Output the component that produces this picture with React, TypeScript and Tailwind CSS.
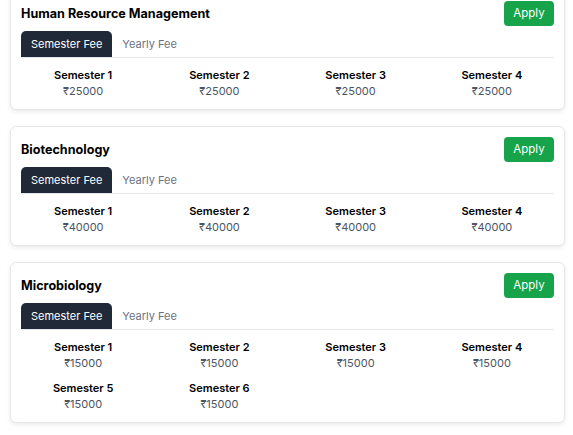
import React from "react";

type Course = { name: string; fees: number[] };

const courses: Course[] = [
  { name: "Human Resource Management", fees: [25000, 25000, 25000, 25000] },
  { name: "Biotechnology", fees: [40000, 40000, 40000, 40000] },
  { name: "Microbiology", fees: [15000, 15000, 15000, 15000, 15000, 15000] },
];

function Card({ course }: { course: Course }) {
  return (
    <div className="rounded-md border border-[#e5e7eb] bg-white px-[10px] pt-[10px] pb-[10px] shadow-[0_2px_4px_rgba(0,0,0,0.08)]">
      <div className="flex items-center justify-between">
        <h2 className="text-[12.6px] font-bold text-black leading-[25px]">{course.name}</h2>
        <button className="h-[25px] w-[50px] rounded-[4px] bg-[#16a34a] text-[11.5px] text-white">
          Apply
        </button>
      </div>
      <div className="mt-[5px] flex border-b border-[#e5e7eb]">
        <div className="h-[26px] rounded-t-[5px] bg-[#1f2937] px-[10px] text-[11px] leading-[26px] text-white">
          Semester Fee
        </div>
        <div className="h-[26px] px-[10px] text-[11px] leading-[26px] text-[#6b7280]">
          Yearly Fee
        </div>
      </div>
      <div className="mt-[9px] grid grid-cols-4 gap-x-3 gap-y-[9px]">
        {course.fees.map((fee, i) => (
          <div key={i} className="flex flex-col items-center">
            <div className="text-[11px] font-semibold leading-[16px] text-black">Semester {i + 1}</div>
            <div className="text-[11px] leading-[16px] text-[#4b5563]">₹{fee}</div>
          </div>
        ))}
      </div>
    </div>
  );
}

export default function App() {
  return (
    <div
      className="ml-[10px] mr-[8px] -mt-[10px] flex flex-col gap-[16px] pb-4"
      style={{ fontFamily: "Inter, 'Noto Sans', sans-serif" }}
    >
      {courses.map((c) => (
        <Card key={c.name} course={c} />
      ))}
    </div>
  );
}
